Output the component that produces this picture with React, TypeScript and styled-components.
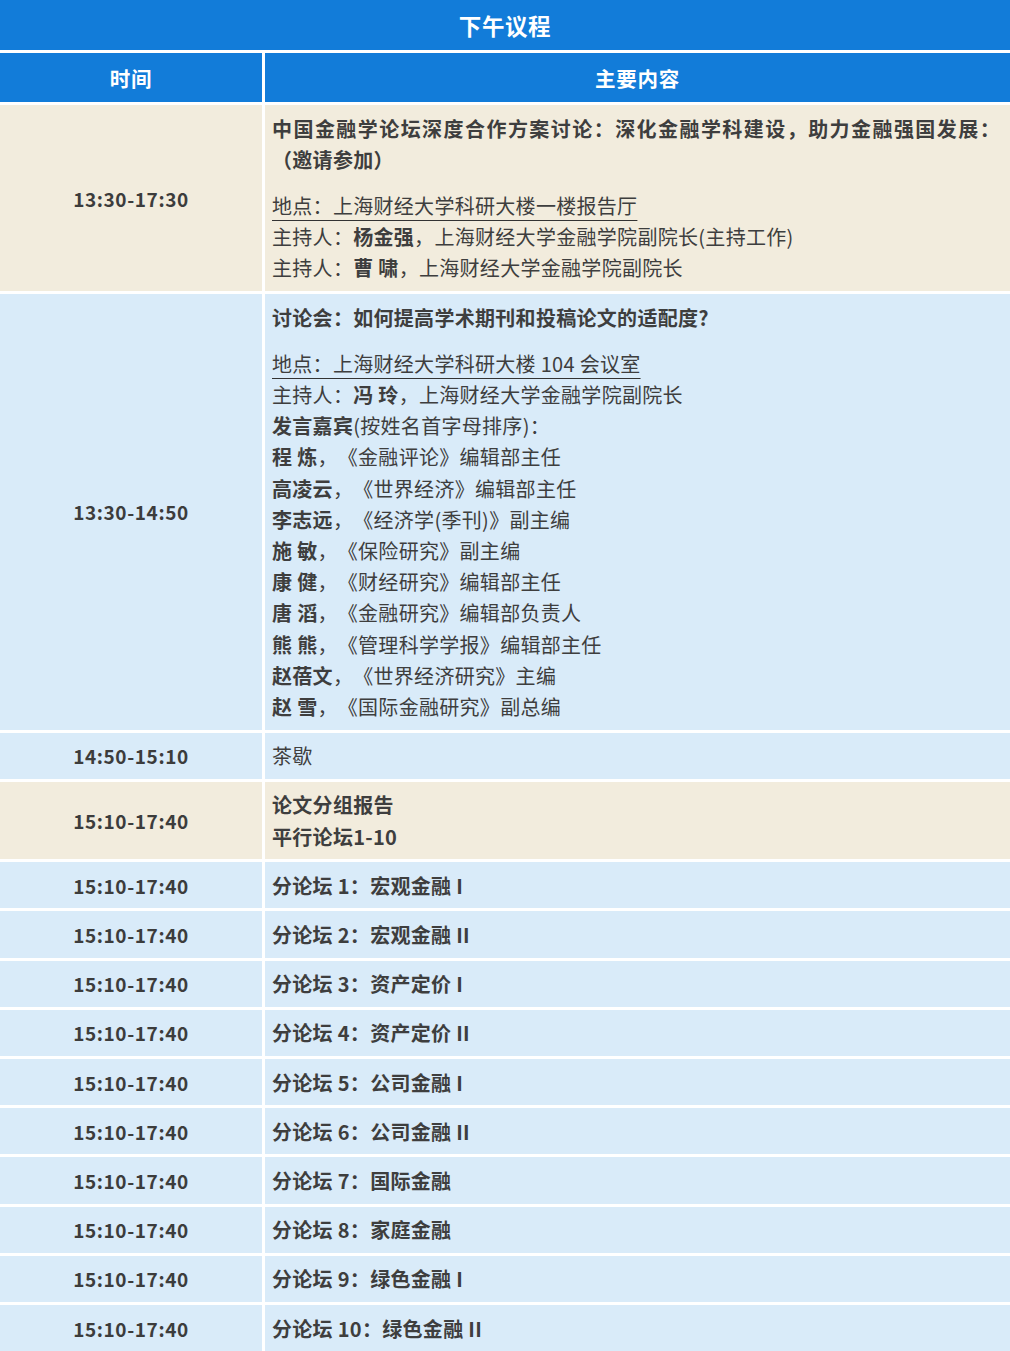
import React from "react";
import styled, { createGlobalStyle } from "styled-components";

const GlobalStyle = createGlobalStyle`
  html, body { margin: 0; padding: 0; background: #ffffff; }
  body {
    font-family: "Noto Sans CJK SC", "Noto Sans", sans-serif;
    color: #3e3e3e;
    text-spacing-trim: space-all;
  }
`;

const Table = styled.div`
  width: 1010px;
  display: grid;
  grid-template-columns: 262px 1fr;
  gap: 3px;
  background: #ffffff;
`;

const TitleCell = styled.div`
  grid-column: 1 / span 2;
  height: 50px;
  background: #127cd9;
  color: #ffffff;
  font-size: 22.5px;
  font-weight: 700;
  display: flex;
  align-items: center;
  justify-content: center;
  letter-spacing: 0.6px;
`;

const HeadCell = styled.div`
  height: 49px;
  background: #127cd9;
  color: #ffffff;
  font-size: 20.5px;
  font-weight: 700;
  display: flex;
  align-items: center;
  justify-content: center;
  letter-spacing: 0.8px;
`;

type Tone = "beige" | "blue";

const bg = (t: Tone) => (t === "beige" ? "#f2ecdd" : "#d9ebf9");

const TimeCell = styled.div<{ $tone: Tone }>`
  background: ${(p) => bg(p.$tone)};
  display: flex;
  align-items: center;
  justify-content: center;
  font-size: 19px;
  font-weight: 700;
  letter-spacing: 0.6px;
  color: #3c3c3c;
`;

const ContentCell = styled.div<{ $tone: Tone }>`
  background: ${(p) => bg(p.$tone)};
  padding: 7.5px 10px 7.5px 7px;
  font-size: 20px;
  line-height: 31.2px;
  letter-spacing: 0.3px;
  color: #3e3e3e;
  text-spacing-trim: space-all;
`;

const Heading = styled.div<{ $gap?: boolean }>`
  font-weight: 700;
  margin-bottom: ${(p) => (p.$gap ? "15px" : "0")};
`;

const JustifiedLine = styled.span`
  display: block;
  text-align: justify;
  text-align-last: justify;
`;

const Line = styled.div``;

const Place = styled.span`
  text-decoration: underline;
  text-decoration-thickness: 1px;
  text-underline-offset: 6px;
  text-decoration-color: #333333;
`;

const B = styled.b`
  font-weight: 700;
`;

const speakers: [string, string][] = [
  ["程 炼", "《金融评论》编辑部主任"],
  ["高凌云", "《世界经济》编辑部主任"],
  ["李志远", "《经济学(季刊)》副主编"],
  ["施 敏", "《保险研究》副主编"],
  ["康 健", "《财经研究》编辑部主任"],
  ["唐 滔", "《金融研究》编辑部负责人"],
  ["熊 熊", "《管理科学学报》编辑部主任"],
  ["赵蓓文", "《世界经济研究》主编"],
  ["赵 雪", "《国际金融研究》副总编"],
];

const forums = [
  "分论坛 1：宏观金融 I",
  "分论坛 2：宏观金融 II",
  "分论坛 3：资产定价 I",
  "分论坛 4：资产定价 II",
  "分论坛 5：公司金融 I",
  "分论坛 6：公司金融 II",
  "分论坛 7：国际金融",
  "分论坛 8：家庭金融",
  "分论坛 9：绿色金融 I",
  "分论坛 10：绿色金融 II",
];

export default function App() {
  return (
    <>
      <GlobalStyle />
      <Table>
        <TitleCell>下午议程</TitleCell>
        <HeadCell>时间</HeadCell>
        <HeadCell>主要内容</HeadCell>

        <TimeCell $tone="beige">13:30-17:30</TimeCell>
        <ContentCell $tone="beige">
          <Heading $gap>
            <JustifiedLine>
              中国金融学论坛深度合作方案讨论：深化金融学科建设，助力金融强国发展：
            </JustifiedLine>
            <span>（邀请参加）</span>
          </Heading>
          <Line>
            <Place>地点：上海财经大学科研大楼一楼报告厅</Place>
          </Line>
          <Line>
            主持人：<B>杨金强</B>，上海财经大学金融学院副院长(主持工作)
          </Line>
          <Line>
            主持人：<B>曹 啸</B>，上海财经大学金融学院副院长
          </Line>
        </ContentCell>

        <TimeCell $tone="blue">13:30-14:50</TimeCell>
        <ContentCell $tone="blue">
          <Heading $gap>讨论会：如何提高学术期刊和投稿论文的适配度?</Heading>
          <Line>
            <Place>地点：上海财经大学科研大楼 104 会议室</Place>
          </Line>
          <Line>
            主持人：<B>冯 玲</B>，上海财经大学金融学院副院长
          </Line>
          <Line>
            <B>发言嘉宾</B>(按姓名首字母排序)：
          </Line>
          {speakers.map(([name, role]) => (
            <Line key={name + role}>
              <B>{name}</B>，{role}
            </Line>
          ))}
        </ContentCell>

        <TimeCell $tone="blue">14:50-15:10</TimeCell>
        <ContentCell $tone="blue">
          <Line>茶歇</Line>
        </ContentCell>

        <TimeCell $tone="beige">15:10-17:40</TimeCell>
        <ContentCell $tone="beige">
          <Heading>论文分组报告</Heading>
          <Heading>平行论坛1-10</Heading>
        </ContentCell>

        {forums.map((f) => (
          <React.Fragment key={f}>
            <TimeCell $tone="blue">15:10-17:40</TimeCell>
            <ContentCell $tone="blue">
              <Heading>{f}</Heading>
            </ContentCell>
          </React.Fragment>
        ))}
      </Table>
    </>
  );
}
